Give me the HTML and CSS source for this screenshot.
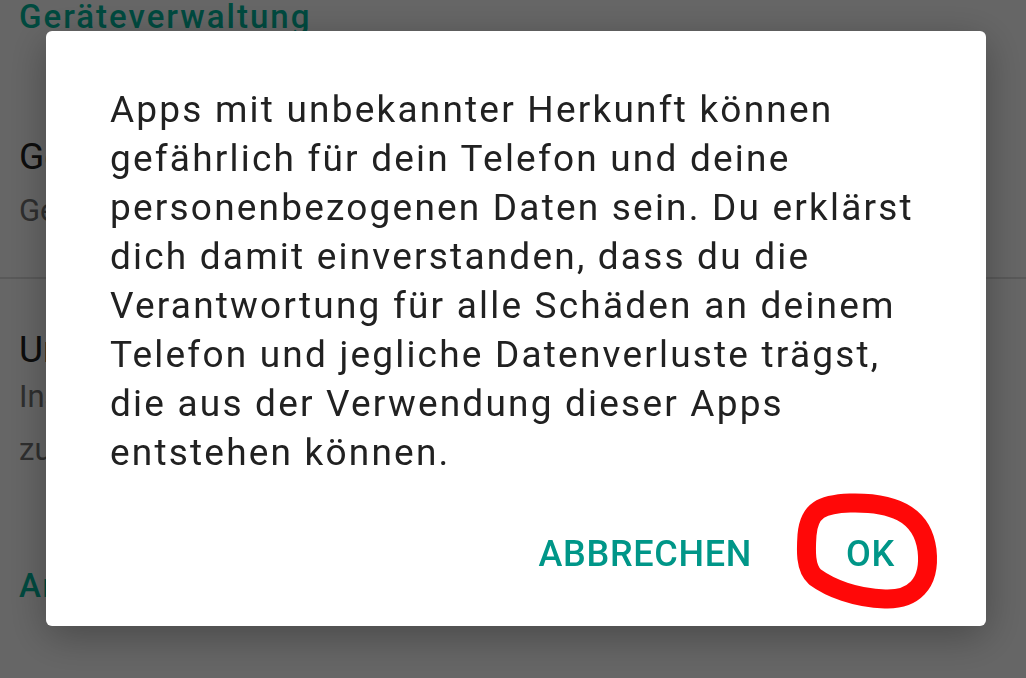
FILE: index.html
```html
<!DOCTYPE html>
<html lang="de">
<head>
<meta charset="utf-8">
<title>Apps unbekannter Herkunft</title>
<link rel="stylesheet" href="styles.css">
</head>
<body>
<div class="page">
  <div class="category">Geräteverwaltung</div>
  <div class="pref">
    <div class="pref-title">Geräteadministratoren</div>
    <div class="pref-summary">Geräteadministratoren ansehen oder deaktivieren</div>
  </div>
  <div class="divider"></div>
  <div class="pref pref-next">
    <div class="pref-title">Unbekannte Herkunft</div>
    <div class="pref-summary pref-summary-multi">Installation von Apps aus unbekannten Quellen<br>zulassen</div>
  </div>
  <div class="category category-low">Anmeldedatenspeicher</div>
</div>
<div class="scrim">
  <div class="dialog">
    <p class="message">Apps mit unbekannter Herkunft können gefährlich für dein Telefon und deine personenbezogenen Daten sein. Du erklärst dich damit einverstanden, dass du die Verantwortung für alle Schäden an deinem Telefon und jegliche Datenverluste trägst, die aus der Verwendung dieser Apps entstehen können.</p>
    <div class="actions">
      <button class="btn">ABBRECHEN</button>
      <button class="btn btn-ok">OK</button>
    </div>
    <svg class="circle" width="155" height="130" viewBox="0 0 155 130" aria-hidden="true">
      <path d="M 60 18 C 100 17, 132 27, 137 65 C 141 100, 122 115, 95 114 C 65 113, 40 103, 25 92 C 15 83, 16 65, 17 50 C 19 25, 32 19, 60 18 Z" fill="none" stroke="#ff0808" stroke-width="19" stroke-linejoin="round"/>
    </svg>
  </div>
</div>
</body>
</html>
```

FILE: styles.css
```css
html, body {
  margin: 0;
  padding: 0;
  width: 1026px;
  height: 678px;
  overflow: hidden;
  background: #ffffff;
  font-family: Roboto, "Noto Sans", sans-serif;
}

.page {
  padding-left: 19px;
  white-space: nowrap;
  overflow: hidden;
  height: 678px;
}

.category {
  font-size: 33px;
  font-weight: 500;
  letter-spacing: 2px;
  color: #00b89e;
  line-height: 36px;
  margin-top: -1px;
}

.pref {
  padding-top: 100px;
}

.pref-next {
  padding-top: 49px;
}

.pref-title {
  font-size: 37px;
  line-height: 44px;
  color: #212121;
}

.pref-summary {
  font-size: 31px;
  line-height: 48px;
  margin-top: 8px;
  color: #757575;
}

.pref-summary-multi {
  line-height: 53px;
  margin-top: -2px;
}

.divider {
  height: 2px;
  background: #dedede;
  margin-left: -19px;
  margin-top: 42px;
}

.category-low {
  margin-top: 92px;
}

.scrim {
  position: fixed;
  inset: 0;
  background: rgba(0, 0, 0, 0.6);
  padding: 31px 0 0 46px;
}

.dialog {
  position: relative;
  width: 940px;
  height: 595px;
  box-sizing: border-box;
  background: #ffffff;
  border-radius: 6px;
  box-shadow: 0 10px 40px rgba(0, 0, 0, 0.3);
  padding: 54px 30px 24px 64px;
  display: flex;
  flex-direction: column;
}

.message {
  margin: 0;
  padding-right: 26px;
  font-size: 37px;
  letter-spacing: 2.2px;
  line-height: 49px;
  color: #212121;
}

.actions {
  margin-top: auto;
  display: flex;
  justify-content: flex-end;
  gap: 12px;
}

.btn {
  font-family: Roboto, "Noto Sans", sans-serif;
  font-size: 36px;
  font-weight: 500;
  letter-spacing: 0.7px;
  color: #009688;
  background: none;
  border: none;
  padding: 0 21px;
  min-width: 171px;
  height: 96px;
  line-height: 96px;
}

.circle {
  position: absolute;
  left: 744px;
  top: 454px;
}
```
